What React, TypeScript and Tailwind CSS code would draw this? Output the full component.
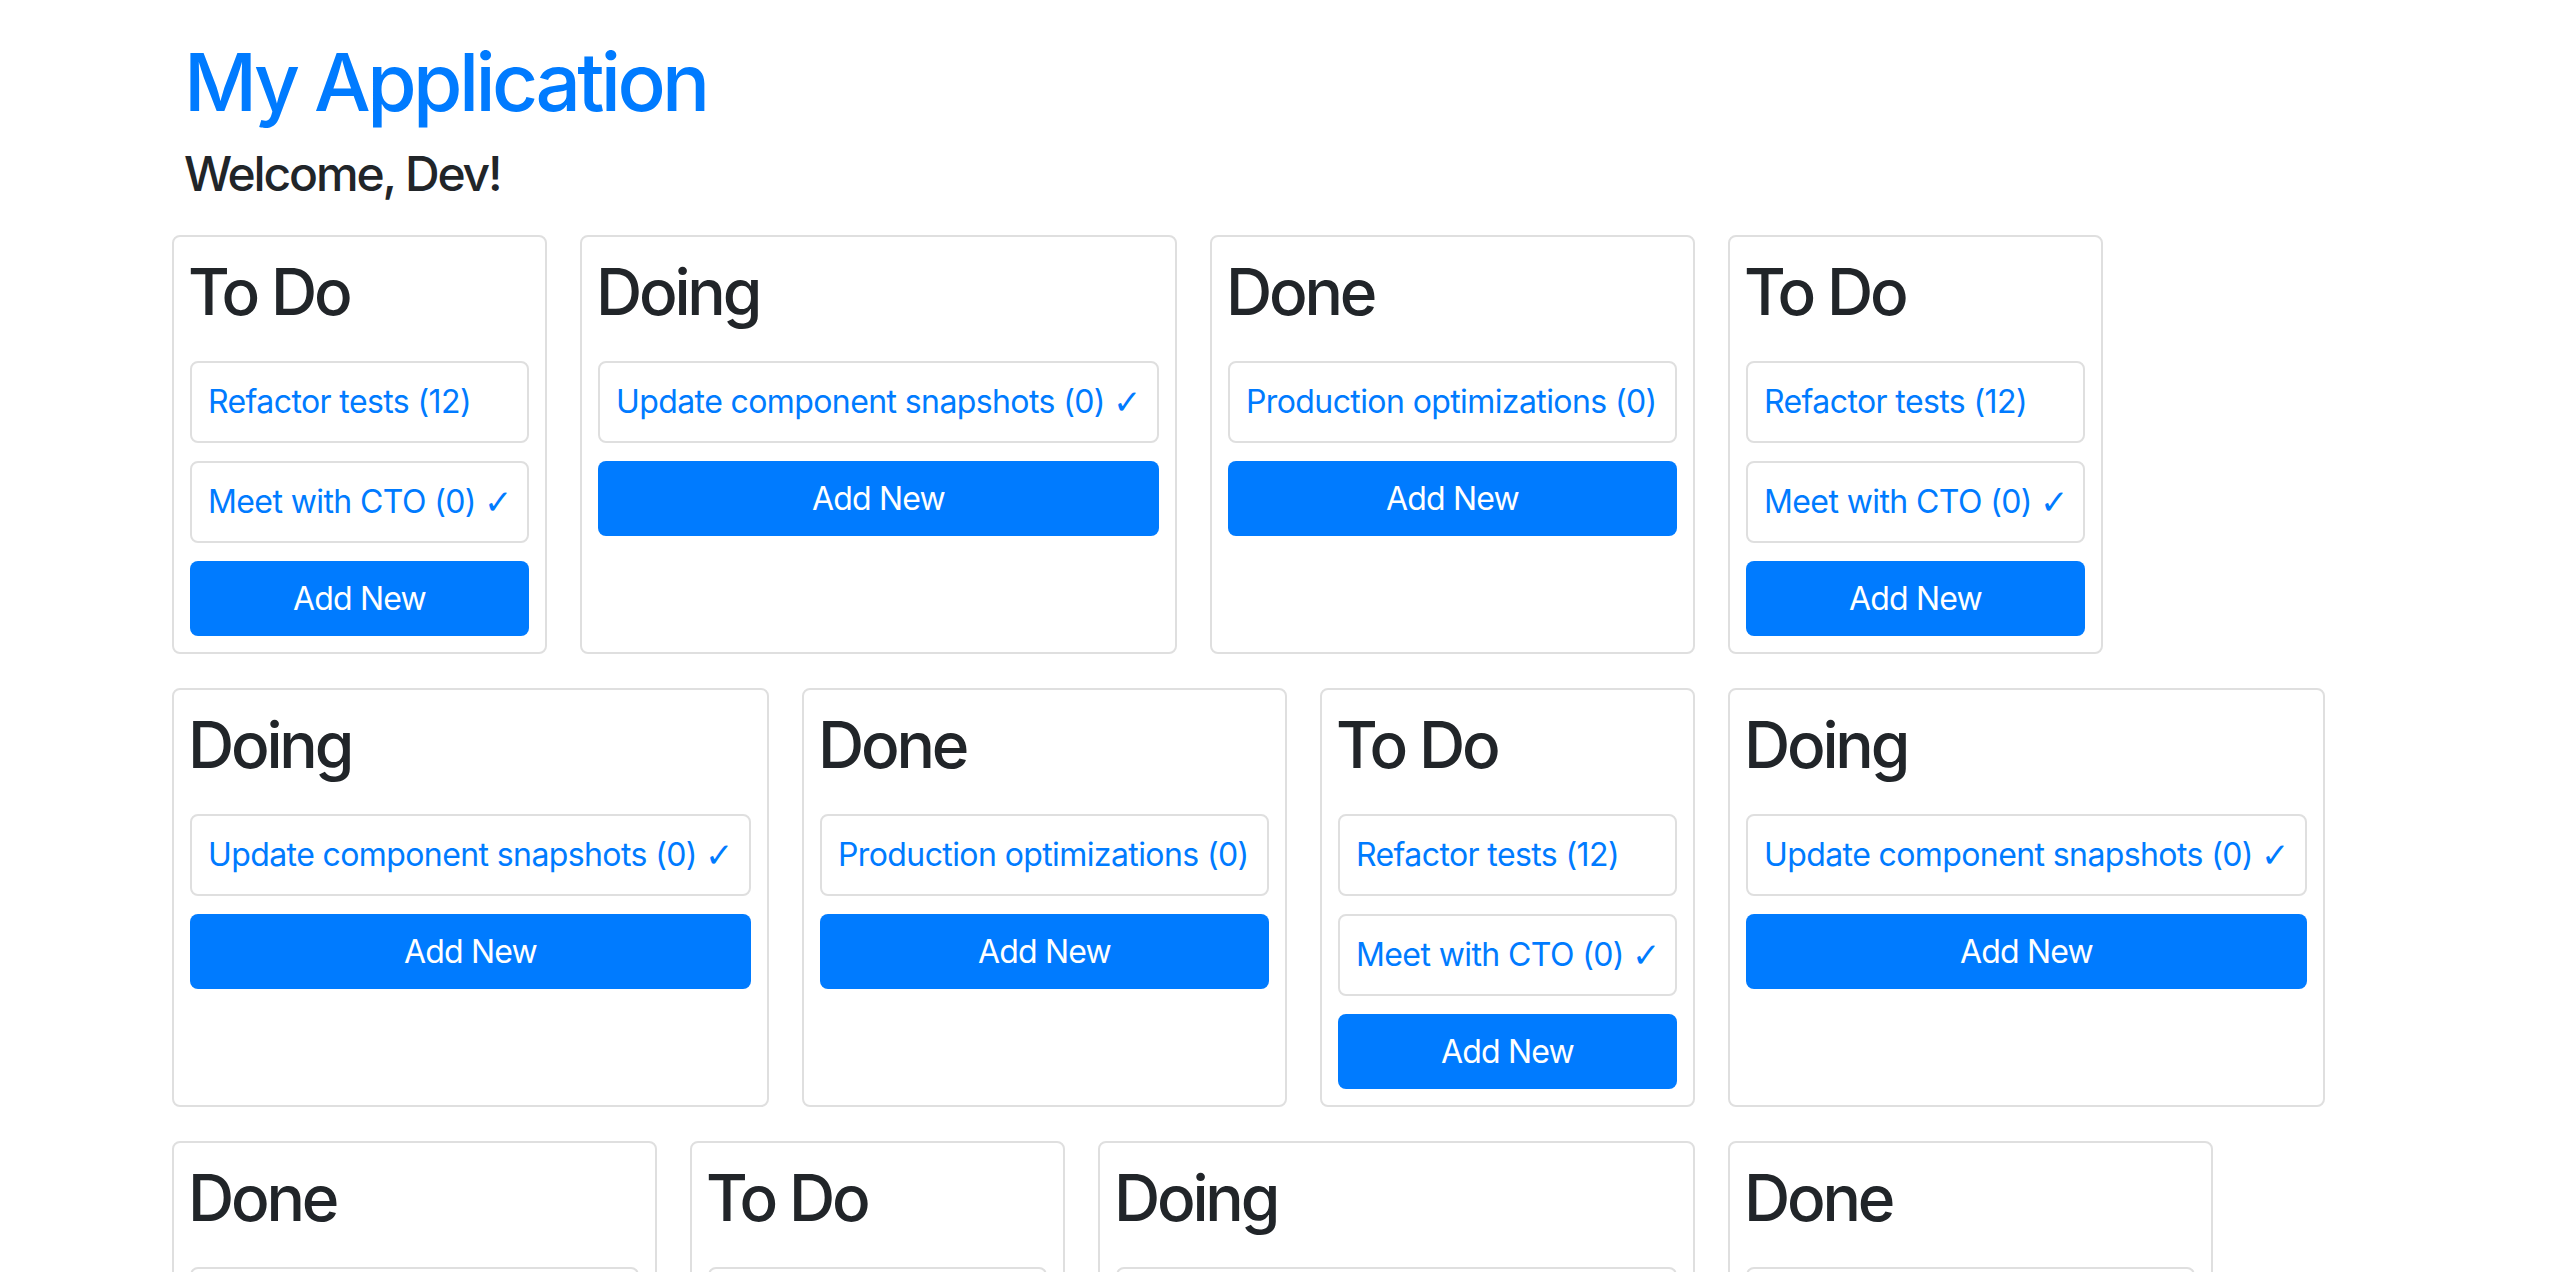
const lists = {
  todo: { title: "To Do", width: "w-[375px]", items: [{ text: "Refactor tests (12)", done: false }, { text: "Meet with CTO (0)", done: true }] },
  doing: { title: "Doing", width: "w-[597px]", items: [{ text: "Update component snapshots (0)", done: true }] },
  done: { title: "Done", width: "w-[485px]", items: [{ text: "Production optimizations (0)", done: false }] },
};

type ListKey = keyof typeof lists;

const board: ListKey[] = [
  "todo", "doing", "done", "todo",
  "doing", "done", "todo", "doing",
  "done", "todo", "doing", "done",
];

function ListCard({ kind }: { kind: ListKey }) {
  const list = lists[kind];
  return (
    <div className={`${list.width} flex flex-col border-2 border-[#dfdfdf] rounded-[8px] bg-white p-[16px]`}>
      <h2 className="-ml-[2px] text-[64px] leading-[77px] font-medium tracking-[-0.05em] text-[#212529] mb-[31px]">{list.title}</h2>
      <div className="flex flex-col gap-[18px]">
        {list.items.map((item) => (
          <div
            key={item.text}
            className="h-[82px] border-2 border-[#dfdfdf] rounded-[8px] px-[16px] flex items-center whitespace-nowrap text-[32px] leading-[48px] tracking-[-0.6px] text-[#007bff]"
          >
            {item.text}
            {item.done && <span className="ml-[8px] font-['DejaVu_Sans',sans-serif] text-[34px] leading-[48px] tracking-normal">✓</span>}
          </div>
        ))}
        <button className="h-[75px] w-full rounded-[8px] bg-[#007bff] text-white text-[32px] leading-[48px] tracking-[-0.8px]">
          Add New
        </button>
      </div>
    </div>
  );
}

export default function App() {
  return (
    <div className="min-h-screen bg-white font-['Inter','Liberation_Sans',sans-serif] pt-[34px] pl-[172px]">
      <div className="pl-[12px]">
        <h1 className="text-[80px] leading-[96px] font-medium tracking-[-0.045em] text-[#007bff] mb-[15px]">My Application</h1>
        <h4 className="text-[48px] leading-[58px] font-medium tracking-[-0.045em] text-[#212529]">Welcome, Dev!</h4>
      </div>
      <div className="mt-[32px] w-[2220px] flex flex-wrap gap-x-[33px] gap-y-[34px]">
        {board.map((kind, i) => (
          <ListCard key={i} kind={kind} />
        ))}
      </div>
    </div>
  );
}
